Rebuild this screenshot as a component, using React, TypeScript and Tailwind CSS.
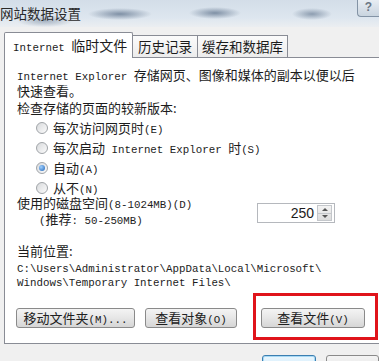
import React from "react";

// ASCII runs are drawn in a small monospace face, like SimSun's Latin glyphs
function Mixed({ text }: { text: string }) {
  const parts = text.split(/([\x20-\x7e]+)/);
  return (
    <span>
      {parts.map((p, i) =>
        /^[\x20-\x7e]+$/.test(p) ? (
          <span key={i} className="font-['Liberation_Mono',monospace] text-[10.8px] leading-none whitespace-pre">
            {p}
          </span>
        ) : (
          <span key={i}>{p}</span>
        )
      )}
    </span>
  );
}

function Radio({ label, checked }: { label: string; checked?: boolean }) {
  return (
    <div className="flex h-[20px] items-center">
      <span className="flex h-[12px] w-[12px] items-center justify-center rounded-full border border-[#a0a4a8] bg-[linear-gradient(135deg,#d8dadc,#fbfbfb)]">
        {checked && (
          <span className="h-[6px] w-[6px] rounded-full bg-[radial-gradient(circle_at_35%_35%,#9fd0ff,#1f63b5)]" />
        )}
      </span>
      <span className="ml-[5px]">
        <Mixed text={label} />
      </span>
    </div>
  );
}

function Btn({ label, w }: { label: string; w: string }) {
  return (
    <div
      className={`flex h-[20px] items-center justify-center rounded-[3px] border border-[#8a8a8a] bg-[linear-gradient(to_bottom,#f4f4f4,#e6e6e6_50%,#d6d6d6)] text-[#202020] ${w}`}
    >
      <Mixed text={label} />
    </div>
  );
}

export default function App() {
  return (
    <div className="relative h-[361px] w-[379px] overflow-hidden bg-[#f0f0f0] font-['Noto_Sans_CJK_SC','Noto_Sans',sans-serif] text-[13px] text-[#1c1c1c]">
      {/* title bar (aero glass) */}
      <div className="flex h-[27px] bg-[radial-gradient(ellipse_28px_6px_at_45px_21px,#a7b4c3,transparent),radial-gradient(ellipse_32px_6px_at_120px_14px,#7f90a5,transparent),radial-gradient(ellipse_26px_6px_at_215px_13px,#7f90a5,transparent),radial-gradient(ellipse_20px_6px_at_312px_14px,#8d9db0,transparent),linear-gradient(to_bottom,#d3dde8,#dde6ef_65%,#ebeef1)]">
        <div className="pt-[4px] text-[13.5px] leading-[18px] text-[#2a2a2a]">网站数据设置</div>
        <div className="ml-auto flex h-[17px] w-[22px] items-start justify-center rounded-bl-[4px] border-b border-l border-[#8393a5] bg-[linear-gradient(to_bottom,#e7edf3,#c9d4df)] font-['Liberation_Sans',sans-serif] text-[12px] font-bold leading-[14px] text-[#6a7684]">
          ?
        </div>
      </div>

      {/* tabs */}
      <div className="mt-[5px] flex items-end pl-[4px]">
        <div className="relative z-10 -mb-px flex h-[26px] w-[129px] items-center rounded-t-[2px] border-x border-t border-[#898c95] bg-white pl-[8px] text-[14px]">
          <Mixed text="Internet 临时文件" />
        </div>
        <div className="flex h-[22px] w-[65px] items-center justify-center border-r border-t border-[#898c95] bg-[linear-gradient(to_bottom,#fbfbfb,#ececec)] text-[13.5px]">
          历史记录
        </div>
        <div className="flex h-[22px] w-[90px] items-center justify-center border-r border-t border-[#898c95] bg-[linear-gradient(to_bottom,#fbfbfb,#ececec)] text-[13.5px]">
          缓存和数据库
        </div>
      </div>

      {/* tab panel */}
      <div className="ml-[4px] h-[287px] w-[390px] border border-[#898c95] bg-white pl-[12px] pt-[9px]">
        <div className="leading-[16px]">
          <div>
            <Mixed text="Internet Explorer 存储网页、图像和媒体的副本以便以后" />
          </div>
          <div>快速查看。</div>
          <div className="mt-[1px]">检查存储的页面的较新版本:</div>
        </div>

        <div className="ml-[19px] mt-[2px]">
          <Radio label="每次访问网页时(E)" />
          <Radio label="每次启动 Internet Explorer 时(S)" />
          <Radio label="自动(A)" checked />
          <Radio label="从不(N)" />
        </div>

        <div className="-mt-[3px] flex">
          <div className="w-[240px] leading-[15px]">
            <div>
              <Mixed text="使用的磁盘空间(8-1024MB)(D)" />
            </div>
            <div className="pl-[22px]">
              <Mixed text="(推荐: 50-250MB)" />
            </div>
          </div>
          <div className="mt-[8px] flex h-[20px] w-[78px] items-center border border-[#b5b8bd] bg-white">
            <span className="flex-1 pr-[3px] text-right font-['Liberation_Sans',sans-serif] text-[14px]">250</span>
            <div className="mr-[2px] flex h-[16px] w-[15px] flex-col border border-[#c4c7cb] bg-[linear-gradient(to_bottom,#f3f3f3,#dcdcdc)]">
              <div className="flex flex-1 items-center justify-center border-b border-[#c4c7cb]">
                <span className="h-0 w-0 border-x-[3px] border-b-[3px] border-x-transparent border-b-[#555]" />
              </div>
              <div className="flex flex-1 items-center justify-center">
                <span className="h-0 w-0 border-x-[3px] border-t-[3px] border-x-transparent border-t-[#555]" />
              </div>
            </div>
          </div>
        </div>

        <div className="mt-[16px] leading-[16px]">当前位置:</div>
        <div className="mt-[3px] font-['Liberation_Mono',monospace] text-[10.8px] leading-[14px]">
          <div>C:\Users\Administrator\AppData\Local\Microsoft\</div>
          <div>Windows\Temporary Internet Files\</div>
        </div>

        <div className="mt-[18px] flex">
          <Btn label="移动文件夹(M)..." w="w-[119px] -ml-px" />
          <Btn label="查看对象(O)" w="w-[92px] ml-[10px]" />
          <Btn label="查看文件(V)" w="w-[104px] ml-[24px]" />
        </div>
      </div>

      {/* dialog buttons */}
      <div className="mt-[11px] flex pl-[262px]">
        <div className="flex h-[24px] w-[78px] items-center justify-center rounded-[3px] border border-[#3c7fb1] bg-[linear-gradient(to_bottom,#eaf6fd,#bee6fd)] shadow-[inset_0_0_0_1px_#a7d9f5]">
          确定
        </div>
        <div className="ml-[10px] flex h-[24px] w-[78px] items-center justify-center rounded-[3px] border border-[#8a8a8a] bg-[linear-gradient(to_bottom,#f4f4f4,#dcdcdc)]">
          取消
        </div>
      </div>

      {/* red highlight annotation */}
      <div className="absolute left-[253px] top-[293px] h-[47px] w-[125px] border-[3px] border-[#e0141b]" />
    </div>
  );
}
